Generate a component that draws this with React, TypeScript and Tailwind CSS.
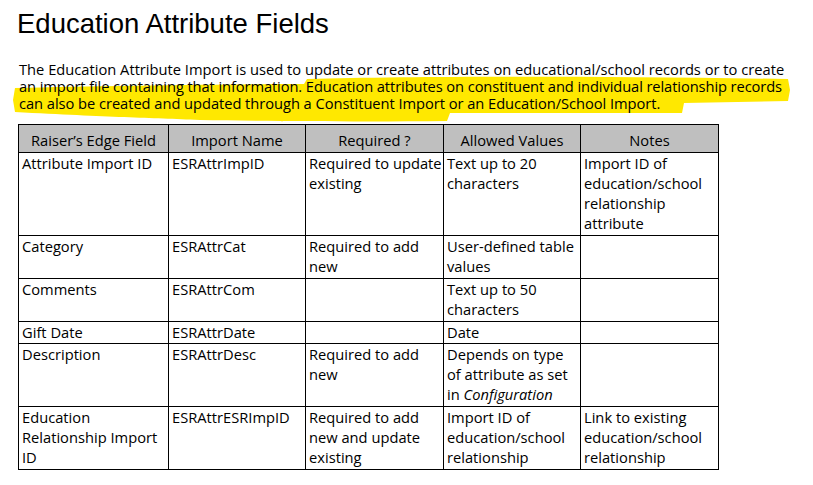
import React from "react";

const body = { fontFamily: '"Open Sans", "Noto Sans", sans-serif' };

type Row = { cells: React.ReactNode[]; pb?: string };

const rows: Row[] = [
  {
    cells: [
      "Attribute Import ID",
      "ESRAttrImpID",
      <>Required to update<br />existing</>,
      <>Text up to 20<br />characters</>,
      <>Import ID of<br />education/school<br />relationship<br />attribute</>,
    ],
  },
  {
    cells: [
      "Category",
      "ESRAttrCat",
      <>Required to add<br />new</>,
      <>User-defined table<br />values</>,
      "",
    ],
  },
  {
    cells: ["Comments", "ESRAttrCom", "", <>Text up to 50<br />characters</>, ""],
  },
  { cells: ["Gift Date", "ESRAttrDate", "", "Date", ""], pb: "pb-[1px]" },
  {
    cells: [
      "Description",
      "ESRAttrDesc",
      <>Required to add<br />new</>,
      <>Depends on type<br />of attribute as set<br />in <i>Configuration</i></>,
      "",
    ],
  },
  {
    cells: [
      <>Education<br />Relationship Import<br />ID</>,
      "ESRAttrESRImpID",
      <>Required to add<br />new and update<br />existing</>,
      <>Import ID of<br />education/school<br />relationship</>,
      <>Link to existing<br />education/school<br />relationship</>,
    ],
  },
];

const headers = ["Raiser\u2019s Edge Field", "Import Name", "Required ?", "Allowed Values", "Notes"];

export default function App() {
  return (
    <div className="relative w-[813px] h-[485px] bg-white overflow-hidden text-black">
      <svg className="absolute left-0 top-0" width="813" height="485" viewBox="0 0 813 485">
        <path
          d="M307,79 C420,76 600,76 788,79 L790,90 L788,101 L684,103 L682,113 L450,113 L447,121 C360,122 260,121 200,120 C150,118 110,117 15,112 L13,100 L15,88 C100,86 250,84 304,84 Z"
          fill="#FFE800"
        />
      </svg>
      <div className="relative z-10 flex flex-col px-[18px] pt-[8px]">
        <h1
          className="text-[27.5px] leading-[31px] ml-[-1px]"
          style={{ fontFamily: '"Liberation Sans", Arial, sans-serif' }}
        >
          Education Attribute Fields
        </h1>
        <p className="mt-[22px] ml-[1px] text-[14.7px] leading-[17px] whitespace-nowrap" style={body}>
          The Education Attribute Import is used to update or create attributes on educational/school records or to create
          <br />
          <span className="tracking-[-0.1px]">
            an import file containing that information. Education attributes on constituent and individual relationship records
          </span>
          <br />
          <span className="tracking-[-0.05px]">
            can also be created and updated through a Constituent Import or an Education/School Import.
          </span>
        </p>
        <div
          className="mt-[12px] grid grid-cols-[150px_137px_138px_137px_138px] w-[701px] border-l border-t border-black text-[14.7px] leading-[20px]"
          style={body}
        >
          {headers.map((h) => (
            <div key={h} className="bg-[#BFBFBF] border-r border-b border-black text-center pt-[5px] pb-[2px] whitespace-nowrap">
              {h}
            </div>
          ))}
          {rows.map((r, i) =>
            r.cells.map((c, j) => (
              <div
                key={`${i}-${j}`}
                className={`border-r border-b border-black pl-[3px] whitespace-nowrap ${r.pb ?? "pb-[2px]"}`}
              >
                {c}
              </div>
            ))
          )}
        </div>
      </div>
    </div>
  );
}
